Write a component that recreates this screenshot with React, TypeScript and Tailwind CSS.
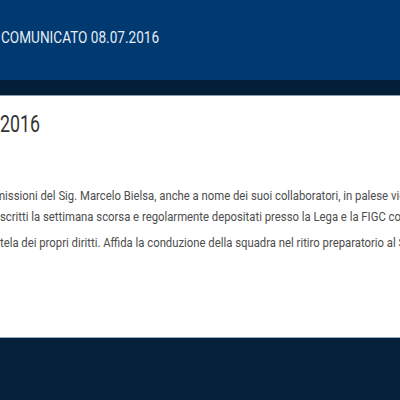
import React from 'react';

export default function App() {
  return (
    <div className="flex h-[400px] w-[400px] flex-col overflow-hidden bg-[#05203b] font-['Roboto',sans-serif]">
      {/* Header bar */}
      <header className="flex h-[80px] shrink-0 items-center bg-[#003a70] pb-[5px] pl-[1px]">
        <span className="origin-left scale-x-[0.85] whitespace-nowrap text-[16px] leading-none text-[#e6edf5]">
          COMUNICATO 08.07.2016
        </span>
      </header>
      <div className="h-[16px] shrink-0 border-b border-[#8d9db0] bg-[#041d38]" />

      {/* Article body */}
      <main className="h-[242px] shrink-0 overflow-hidden border-b border-[#9aa9bb] bg-white pt-[16px]">
        <h1 className="origin-left scale-x-[0.74] whitespace-nowrap text-[24px] leading-none text-[#333333]">
          2016
        </h1>
        <div className="mt-[49px] text-[13px] leading-[21px] text-[#4d4d4d]">
          <p>
            <span className="-ml-[13.8px] block origin-left scale-x-[0.87] whitespace-nowrap">
              dimissioni del Sig. Marcelo Bielsa, anche a nome dei suoi collaboratori, in palese violazione degli accordi
            </span>
            <span className="-ml-[26.2px] block origin-left scale-x-[0.87] whitespace-nowrap">
              sottoscritti la settimana scorsa e regolarmente depositati presso la Lega e la FIGC con effetto immediato.
            </span>
          </p>
          <p className="mt-[5px]">
            <span className="-ml-[10px] block origin-left scale-x-[0.87] whitespace-nowrap">
              tutela dei propri diritti. Affida la conduzione della squadra nel ritiro preparatorio al Sig. Simone Inzaghi.
            </span>
          </p>
        </div>
      </main>

      {/* Footer */}
      <footer className="flex-1 bg-[#05203b]" />
    </div>
  );
}
